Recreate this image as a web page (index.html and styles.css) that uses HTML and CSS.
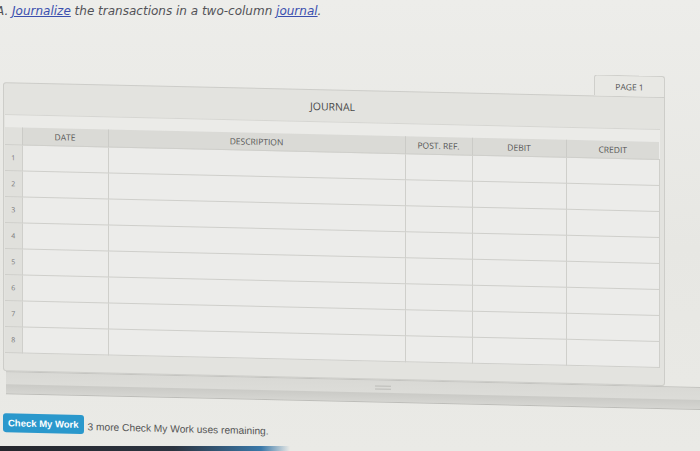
FILE: index.html
```html
<!DOCTYPE html>
<html>
<head>
<meta charset="utf-8">
<link rel="stylesheet" href="styles.css">
</head>
<body>
<div class="page">
  <p class="prompt">A. <a class="lnk">Journalize</a> the transactions in a two-column <a class="lnk">journal</a>.</p>
  <div class="sheet">
    <div class="tabrow"><div class="tab">PAGE 1</div></div>
    <div class="panel">
      <div class="ptitle">JOURNAL</div>
      <div class="tablewrap">
        <table class="jt">
          <colgroup>
            <col class="w-num"><col class="w-date"><col class="w-desc"><col class="w-ref"><col class="w-deb"><col class="w-cred">
          </colgroup>
          <thead>
            <tr><th class="num"></th><th>DATE</th><th>DESCRIPTION</th><th>POST. REF.</th><th>DEBIT</th><th>CREDIT</th></tr>
          </thead>
          <tbody>
            <tr><td class="num">1</td><td></td><td></td><td></td><td></td><td></td></tr>
            <tr><td class="num">2</td><td></td><td></td><td></td><td></td><td></td></tr>
            <tr><td class="num">3</td><td></td><td></td><td></td><td></td><td></td></tr>
            <tr><td class="num">4</td><td></td><td></td><td></td><td></td><td></td></tr>
            <tr><td class="num">5</td><td></td><td></td><td></td><td></td><td></td></tr>
            <tr><td class="num">6</td><td></td><td></td><td></td><td></td><td></td></tr>
            <tr><td class="num">7</td><td></td><td></td><td></td><td></td><td></td></tr>
            <tr><td class="num">8</td><td></td><td></td><td></td><td></td><td></td></tr>
          </tbody>
        </table>
      </div>
    </div>
    <div class="scrollbar"><div class="grip"></div></div>
  </div>
  <div class="actions">
    <button class="check">Check My Work</button>
    <span class="remain">3 more Check My Work uses remaining.</span>
  </div>
  <div class="taskbar"></div>
</div>
</body>
</html>
```

FILE: styles.css
```css
html, body {
  margin: 0;
  padding: 0;
}
body {
  width: 700px;
  height: 451px;
  overflow: hidden;
  background: #e8e8e4;
  font-family: "Open Sans", "DejaVu Sans", sans-serif;
  color: #555;
}
.page {
  position: relative;
  height: 451px;
  background: linear-gradient(180deg, #ededea 0%, #e7e7e3 55%, #eaeae6 100%);
}
.prompt {
  margin: 0 0 0 -4px;
  padding: 4px 0 0 0;
  height: 22px;
  font-family: "DejaVu Sans", sans-serif;
  font-style: italic;
  font-size: 12px;
  color: #525257;
}
.lnk {
  color: #3b4fae;
  text-decoration: underline;
}
.sheet {
  margin-top: 35px;
  transform: skewY(1.3deg);
  transform-origin: 0 0;
}
.tabrow {
  display: flex;
  justify-content: flex-end;
  padding-right: 35px;
}
.tab {
  width: 69px;
  height: 20px;
  border: 1px solid #cfcfcb;
  border-bottom: none;
  border-radius: 3px 3px 0 0;
  background: #e8e8e4;
  font-size: 8.5px;
  color: #555;
  display: flex;
  align-items: center;
  justify-content: center;
}
.panel {
  margin: 0 35px 0 3px;
  border: 1px solid #cdcdc9;
  border-radius: 3px 0 3px 3px;
  background: #e3e3df;
  padding: 0 4px 17px 1px;
}
.ptitle {
  height: 31px;
  display: flex;
  align-items: center;
  justify-content: center;
  font-size: 10.5px;
  color: #4a4a4a;
}
.tablewrap {
  background: #ebebe8;
  padding-top: 12px;
  border-top: 1px solid #d6d6d2;
}
.jt {
  width: 654px;
  border-collapse: collapse;
  table-layout: fixed;
  background: #ececea;
}
.w-num { width: 17px; }
.w-date { width: 86px; }
.w-desc { width: 297px; }
.w-ref { width: 67px; }
.w-deb { width: 94px; }
.w-cred { width: 93px; }
.jt th {
  height: 17px;
  background: #dadad6;
  font-weight: normal;
  font-size: 8.5px;
  color: #555;
  border-left: 1px solid #cbcbc7;
  padding: 0;
}
.jt td {
  height: 25px;
  border: 1px solid #cfcfcb;
  padding: 0;
}
.jt th.num, .jt td.num {
  background: #e0e0dc;
  font-size: 7px;
  color: #777;
  text-align: center;
  border-left: none;
}
.scrollbar {
  margin: 0 0 0 6px;
  height: 21px;
  border-top: 1px solid #c4c4c0;
  border-bottom: 1px solid #bdbdb9;
  background: linear-gradient(180deg, #d9d9d5 0%, #dcdcd8 55%, #cbcbc7 60%, #d5d5d1 100%);
  display: flex;
  justify-content: center;
  align-items: flex-start;
}
.grip {
  width: 16px;
  height: 2px;
  border-top: 1px solid #bcbcb8;
  border-bottom: 1px solid #bcbcb8;
  margin: 5px 0 0 60px;
}
.actions {
  display: flex;
  align-items: center;
  margin-top: 19px;
  padding-left: 3px;
  gap: 4px;
  transform: skewY(1.4deg);
  transform-origin: 0 0;
}
.check {
  height: 19px;
  padding: 0 5px;
  border: none;
  border-radius: 3px;
  background: #2a98cc;
  color: #fff;
  font-family: "Liberation Sans", Arial, sans-serif;
  font-weight: bold;
  font-size: 9.5px;
}
.remain {
  font-family: "Liberation Sans", Arial, sans-serif;
  font-size: 10.2px;
  color: #555;
  margin-top: 3px;
}
.taskbar {
  position: absolute;
  left: 0;
  bottom: 0;
  width: 290px;
  height: 5px;
  background: linear-gradient(90deg, #25262c 0%, #2c3440 60%, #3a78a8 90%, rgba(58,120,168,0) 100%);
}
```
